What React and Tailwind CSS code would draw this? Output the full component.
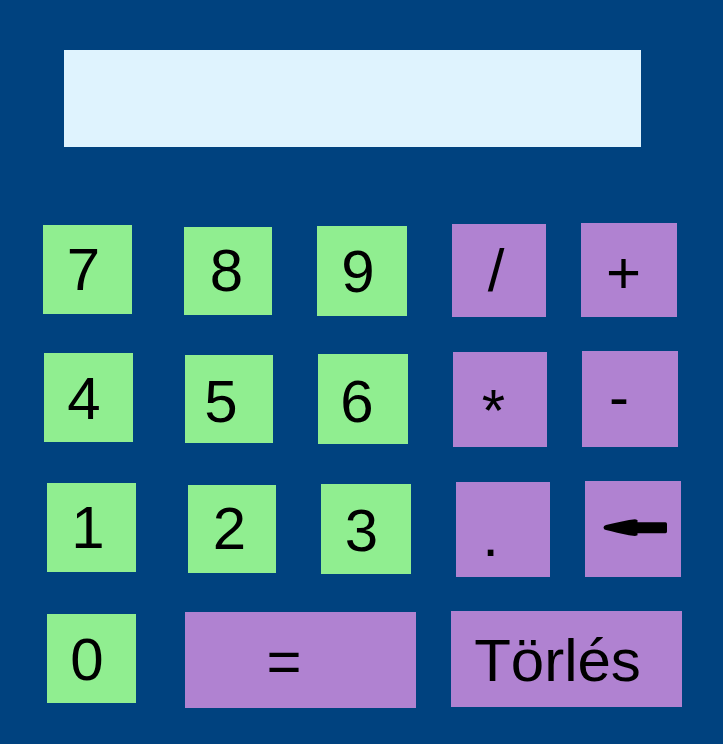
const rows = [
  {
    mt: 'mt-[76px]',
    keys: [
      { label: '7', box: 'ml-[43px] mt-[2px] w-[89px] h-[89px]', tone: 'green', nudge: 'pr-[8px]' },
      { label: '8', box: 'ml-[52px] mt-[4px] w-[88px] h-[88px]', tone: 'green', nudge: 'pr-[3px]' },
      { label: '9', box: 'ml-[45px] mt-[3px] w-[90px] h-[90px]', tone: 'green', nudge: 'pr-[8px] pt-[2px]' },
      { label: '/', box: 'ml-[45px] mt-[1px] w-[94px] h-[93px]', tone: 'purple', nudge: 'pr-[6px]' },
      { label: '+', box: 'ml-[35px] mt-0 w-[96px] h-[94px]', tone: 'purple', nudge: 'pr-[11px] pt-[6px]' },
    ],
  },
  {
    mt: 'mt-[34px]',
    keys: [
      { label: '4', box: 'ml-[44px] mt-[2px] w-[89px] h-[89px]', tone: 'green', nudge: 'pr-[9px] pt-[2px]' },
      { label: '5', box: 'ml-[52px] mt-[4px] w-[88px] h-[88px]', tone: 'green', nudge: 'pr-[16px] pt-[6px]' },
      { label: '6', box: 'ml-[45px] mt-[3px] w-[90px] h-[90px]', tone: 'green', nudge: 'pr-[12px] pt-[6px]' },
      { label: '*', box: 'ml-[45px] mt-[1px] w-[94px] h-[95px]', tone: 'purple', nudge: 'pr-[13px] pt-[22px]' },
      { label: '-', box: 'ml-[35px] mt-0 w-[96px] h-[96px]', tone: 'purple', nudge: 'pr-[22px] pb-[4px]' },
    ],
  },
  {
    mt: 'mt-[34px]',
    keys: [
      { label: '1', box: 'ml-[47px] mt-[2px] w-[89px] h-[89px]', tone: 'green', nudge: 'pr-[7px]' },
      { label: '2', box: 'ml-[52px] mt-[4px] w-[88px] h-[88px]', tone: 'green', nudge: 'pr-[5px]' },
      { label: '3', box: 'ml-[45px] mt-[3px] w-[90px] h-[90px]', tone: 'green', nudge: 'pr-[9px] pt-[4px]' },
      { label: '.', box: 'ml-[45px] mt-[1px] w-[94px] h-[95px]', tone: 'purple', nudge: 'pr-[25px] pt-[12px]' },
      { label: 'back', box: 'ml-[35px] mt-0 w-[96px] h-[96px]', tone: 'purple', nudge: '' },
    ],
  },
  {
    mt: 'mt-[34px]',
    keys: [
      { label: '0', box: 'ml-[47px] mt-[3px] w-[89px] h-[89px]', tone: 'green', nudge: 'pr-[9px] pt-[2px]' },
      { label: '=', box: 'ml-[49px] mt-[1px] w-[231px] h-[96px]', tone: 'purple', nudge: 'pr-[33px] pt-[4px]' },
      { label: 'Törlés', box: 'ml-[35px] mt-0 w-[231px] h-[96px]', tone: 'purple', nudge: 'pr-[18px] pt-[4px]' },
    ],
  },
]

// chunky backspace arrow, drawn in the key's own 96x96 box
function BackArrow() {
  return (
    <svg width="96" height="96" viewBox="0 0 96 96">
      <path
        d="M18.5 46.5 Q18.5 44.5 21 44 C28 42.5 36 40.5 44 39 L50 38.3 L52.5 39 L52.5 41.3 L80.5 41.3 Q82 41.3 82 43 L82 50.5 Q82 52.3 80.5 52.3 L52.5 52.3 L52.5 54.3 L50 55 L44 54.2 C36 52.8 28 50.8 21 49 Q18.5 48.5 18.5 46.5 Z"
        fill="#000"
      />
    </svg>
  )
}

export default function App() {
  return (
    <div className="w-[723px] h-[744px] bg-[#00427f] overflow-hidden flex flex-col" style={{ fontFamily: '"Liberation Sans", Arial, sans-serif' }}>
      <div className="ml-[64px] mt-[50px] w-[577px] h-[97px] bg-[#dff3fe]" />

      {rows.map((row, i) => (
        <div key={i} className={`flex items-start ${row.mt}`}>
          {row.keys.map(k => (
            <button
              key={k.label}
              className={`${k.box} ${k.nudge} shrink-0 flex items-center justify-center text-[60px] text-black ${k.tone === 'green' ? 'bg-[#90ee90]' : 'bg-[#b082d1]'}`}
            >
              {k.label === 'back' ? <BackArrow /> : k.label}
            </button>
          ))}
        </div>
      ))}
    </div>
  )
}
